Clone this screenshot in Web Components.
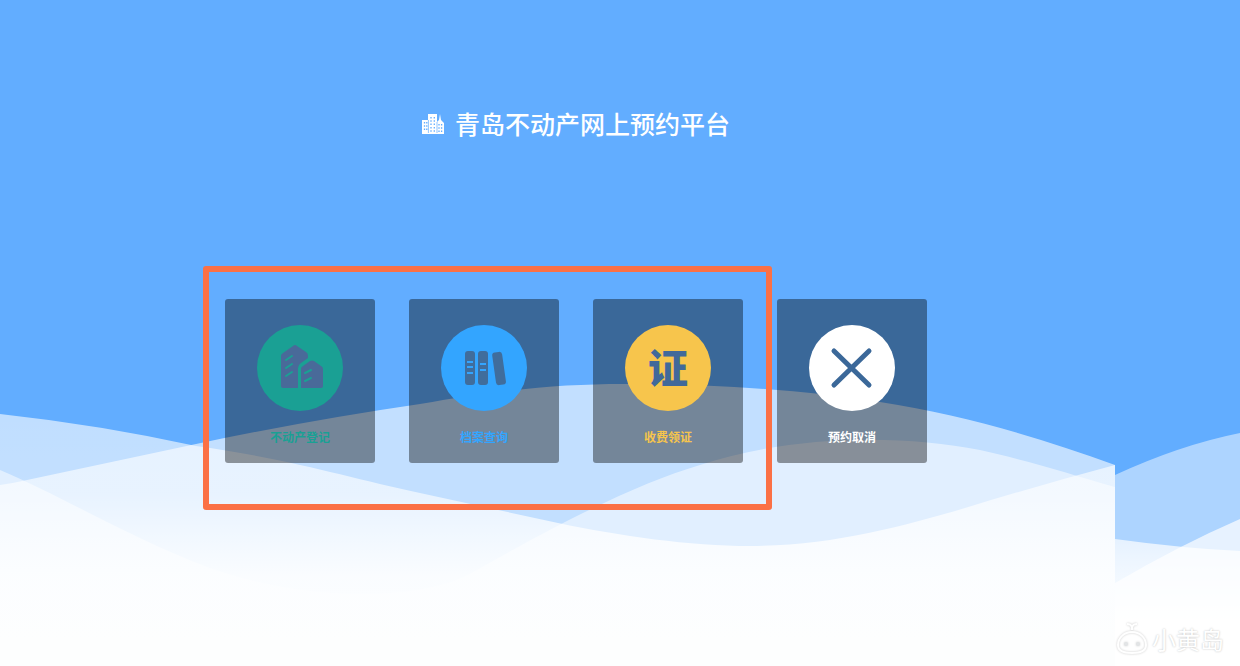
<!DOCTYPE html>
<html lang="zh-CN">
<head>
<meta charset="utf-8">
<title>青岛不动产网上预约平台</title>
<style>
body {
  margin: 0;
  font-family: "Noto Sans CJK SC", sans-serif;
}
</style>
</head>
<body>
<booking-page>
  <page-title slot="header">青岛不动产网上预约平台</page-title>
  <service-card style="--accent: #1aa094" icon="house">不动产登记</service-card>
  <service-card style="--accent: #33a5ff" icon="files">档案查询</service-card>
  <service-card style="--accent: #f7c54c" icon="cert">收费领证</service-card>
  <service-card style="--accent: #fff" icon="cancel">预约取消</service-card>
  <site-mark slot="footer">小黄岛</site-mark>
</booking-page>

<script>
const define = (name, html, setup) => {
  const template = document.createElement("template");
  template.innerHTML = html;
  customElements.define(name, class extends HTMLElement {
    constructor() {
      super();
      this.attachShadow({ mode: "open" });
      this.shadowRoot.appendChild(template.content.cloneNode(true));
      if (setup) setup(this);
    }
  });
};

define("wave-background", `\
<style>
:host {
  display: block;
  background: #62adff;
}
svg {
  display: block;
  width: 100%;
  height: 100%;
}
</style>
<svg viewBox="0 0 1240 666" preserveAspectRatio="none" aria-hidden="true">
  <defs>
    <linearGradient id="front" gradientUnits="userSpaceOnUse" x1="0" y1="414" x2="0" y2="640">
      <stop offset="0" stop-color="#fff" stop-opacity=".6"/>
      <stop offset=".35" stop-color="#fff" stop-opacity=".62"/>
      <stop offset=".5" stop-color="#fff" stop-opacity=".74"/>
      <stop offset=".72" stop-color="#fdfeff" stop-opacity=".95"/>
      <stop offset="1" stop-color="#fdfefe"/>
    </linearGradient>
    <linearGradient id="side" gradientUnits="userSpaceOnUse" x1="0" y1="519" x2="0" y2="620">
      <stop offset="0" stop-color="#fff" stop-opacity=".6"/>
      <stop offset=".4" stop-color="#fff" stop-opacity=".78"/>
      <stop offset="1" stop-color="#fdfefe"/>
    </linearGradient>
  </defs>
  <path fill="#fff" fill-opacity=".61" d="M0 485Q14 483 27 480L196 444Q310 420 420 404C510 388 570 383 640 384C730 385 810 391 880 402C965 415 1040 438 1115 465V666H0Z"/>
  <path fill="#fff" fill-opacity=".5" d="M0 470C60 495 130 538 210 568C300 600 420 604 475 571C570 517 640 483 700 465C790 435 900 434 980 450C1030 461 1070 474 1115 487V666H0Z"/>
  <path fill="url(#front)" d="M0 414Q100 425 196 446C290 459 350 478 420 493L558 523C620 536 690 546 750 546C830 546 900 527 965 508Q1040 485 1115 465V666H0Z"/>
  <path fill="#fff" fill-opacity=".48" d="M1115 475Q1180 445 1240 433V666H1115Z"/>
  <path fill="url(#side)" d="M1115 539Q1180 548 1240 551V666H1115Z"/>
  <path fill="#fff" fill-opacity=".7" d="M1115 583Q1180 545 1240 519V666H1115Z"/>
</svg>
`);

define("page-title", `\
<style>
:host {
  display: flex;
  justify-content: center;
  align-items: center;
  gap: 11px;
  color: #fff;
}
h1 {
  margin: 0;
  font-size: 25px;
  line-height: 36px;
  font-weight: 500;
}
svg {
  margin-top: 2px;
}
</style>
<svg width="22" height="20" viewBox="0 0 22 20" aria-hidden="true">
  <path fill="#fff" d="M0 19V6h6V0h9v8l2-2 1-6 1 6 3 3v11H0z"/>
  <path fill="none" stroke="#62adff" stroke-width="1.3" stroke-dasharray="1.5 1.8" d="M2.5 8v10M4.8 8v10M9 3v15M12.3 3v15M17 10v8M19.6 10v8"/>
  <path stroke="#62adff" stroke-width=".7" d="M6.4 6v13M15 8v11"/>
</svg>
<h1><slot></slot></h1>
`);

// the glyphs are drawn in the colour of the card behind the disc
const icons = {
  house: `
    <path fill="#496a99" d="M24 31q0-2 2-3l10-7q2-2 4 0l9 6q2 1 2 4v2l-7 5q-3 2-3 5v20H26q-2 0-2-2zM44 44q0-2 2-3l7-5q2-1 4 0l7 5q2 1 2 3v17q0 2-2 2H44z"/>
    <path fill="none" stroke="var(--accent)" stroke-width="2" stroke-linecap="round" d="M29 35l6-4M29 43l6-4M29 51l6-4M48 48l6-3M48 56l6-3"/>`,
  files: `
    <g fill="#406d9c">
      <rect x="24" y="26" width="10" height="34" rx="3"/>
      <rect x="37" y="26" width="10" height="34" rx="3"/>
      <rect x="53" y="27" width="10" height="33" rx="3" transform="rotate(-8 58 43)"/>
    </g>
    <path stroke="var(--accent)" stroke-width="2" d="M26 37h6M26 42h6M26 48h6M39 39h6M39 45h6"/>`,
  cert: `<span>证</span>`,
  cancel: `
    <path stroke="#3b6899" stroke-width="5" stroke-linecap="round" d="M25 26l35 34M60 26L25 60"/>`,
};

define("service-card", `\
<style>
:host {
  display: block;
}
a {
  display: flex;
  flex-direction: column;
  align-items: center;
  gap: 17px;
  padding: 26px 0 17px;
  border-radius: 3px;
  background: rgba(0, 0, 0, .4);
  color: var(--accent);
  font-size: 12px;
  line-height: 18px;
  font-weight: 700;
  text-decoration: none;
}
.disc {
  display: flex;
  align-items: center;
  justify-content: center;
  width: 86px;
  height: 86px;
  border-radius: 50%;
  background: var(--accent);
}
.disc span {
  color: #41699a;
  font-size: 40px;
  line-height: 82px;
  font-weight: 900;
  padding-bottom: 4px;
}
</style>
<a href="#"><div class="disc"></div><slot></slot></a>
`, (el) => {
  const name = el.getAttribute("icon");
  el.shadowRoot.querySelector(".disc").innerHTML = name === "cert"
    ? icons.cert
    : `<svg width="86" height="86" viewBox="0 0 86 86" aria-hidden="true">${icons[name]}</svg>`;
});

define("site-mark", `\
<style>
:host {
  display: flex;
  justify-content: flex-end;
  align-items: center;
  gap: 4px;
  color: #fff;
  font-size: 24px;
  line-height: 34px;
  font-weight: 400;
  text-shadow: 0 0 2px #bbb;
}
svg {
  filter: drop-shadow(0 0 1px #ccc);
}
</style>
<svg width="32" height="34" viewBox="0 0 32 34" fill="none" stroke="#fff" stroke-width="2" aria-hidden="true">
  <path d="M16 10C8 10 2 16 2 23c0 6 5 8 14 8s14-2 14-8c0-7-6-13-14-13zM16 8V4M16 5q-1-3-5-3M16 5q1-3 5-3"/>
  <g fill="#e2e4e6" stroke="none"><circle cx="10" cy="22" r="2"/><circle cx="22" cy="22" r="2"/></g>
</svg>
<slot></slot>
`);

define("booking-page", `\
<style>
:host {
  position: relative;
  display: flex;
  flex-direction: column;
  min-height: 100vh;
}
wave-background {
  position: absolute;
  inset: 0;
}
header, main, footer {
  position: relative;
}
header, main {
  padding-right: 88px;
}
header {
  padding-top: 105px;
}
main {
  display: flex;
  justify-content: center;
  padding-top: 158px;
}
.cards {
  position: relative;
  display: grid;
  grid-template-columns: repeat(4, 150px);
  gap: 34px;
}
/* highlight round the first three services */
.frame {
  position: absolute;
  top: -33px;
  bottom: -47px;
  left: -22px;
  width: 557px;
  border: 6px solid #fb7045;
  border-radius: 3px;
  pointer-events: none;
}
footer {
  margin-top: auto;
  padding: 0 16px 10px;
}
</style>
<wave-background></wave-background>
<header><slot name="header"></slot></header>
<main>
  <div class="cards">
    <slot></slot>
    <div class="frame"></div>
  </div>
</main>
<footer><slot name="footer"></slot></footer>
`);
</script>
</body>
</html>
